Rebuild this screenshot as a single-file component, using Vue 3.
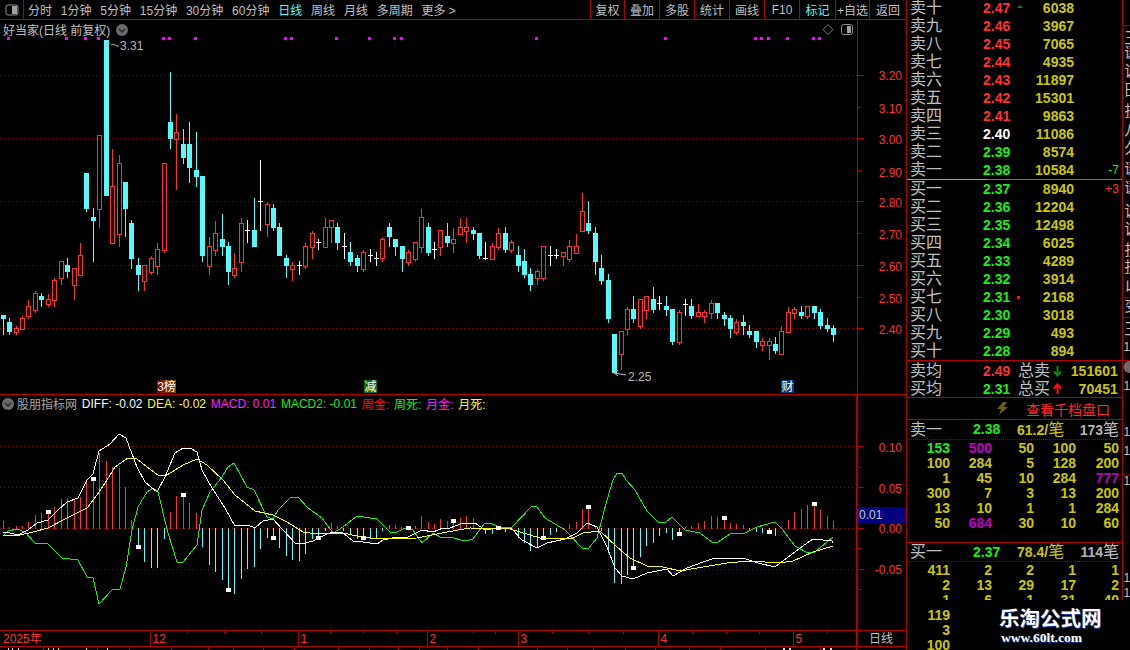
<script setup>
const leftTabs = [
  { t: '分时' }, { t: '1分钟' }, { t: '5分钟' }, { t: '15分钟' }, { t: '30分钟' }, { t: '60分钟' },
  { t: '日线', on: true }, { t: '周线' }, { t: '月线' }, { t: '多周期' }, { t: '更多 >' }
]
const rightBtns = [
  { t: '复权', w: 34 }, { t: '叠加', w: 35 }, { t: '多股', w: 35 }, { t: '统计', w: 35 }, { t: '画线', w: 35 },
  { t: 'F10', w: 35 }, { t: '标记', w: 36, on: true }, { t: '+自选', w: 34 }, { t: '返回', w: 37 }
]
const c = 'c', r = 'r', w = 'w'
// x, high, low, bodyTop, bodyBottom, kind
const candles = [
  [3,315,334,315,318,c],[9,318,334,322,331,c],[16,326,334,328,332,r],[22,316,329,318,329,r],[28,300,318,306,316,r],
  [35,291,312,293,310,r],[41,293,306,296,299,c],[48,294,306,299,304,r],[54,278,306,280,300,r],[61,261,284,261,278,r],
  [67,258,277,265,271,c],[74,268,299,268,285,r],[80,243,275,255,275,r],[86,173,211,173,208,c],[93,208,261,217,220,c],
  [99,135,227,135,209,r],[106,40,195,40,195,c],[112,149,243,186,243,r],[119,155,246,163,234,r],[125,182,236,182,208,c],
  [131,220,268,223,258,c],[138,258,290,265,274,c],[144,265,290,265,281,r],[151,256,274,258,272,r],[157,243,274,249,266,r],
  [164,163,252,163,250,r],[170,72,148,122,138,c],[176,114,189,132,139,r],[183,129,163,144,157,c],[189,122,182,144,167,c],
  [196,132,186,170,176,c],[202,176,261,176,255,c],[209,237,274,246,266,r],[215,221,255,233,250,r],[222,214,255,239,246,c],
  [228,242,284,246,271,c],[234,253,277,268,275,r],[241,218,271,223,262,r],[247,220,242,230,230,w],[254,198,246,230,246,c],
  [260,160,230,201,201,w],[267,202,236,204,224,r],[273,204,230,208,227,c],[279,223,255,227,255,c],[286,255,277,258,265,c],
  [292,262,280,265,269,r],[299,261,274,265,265,w],[305,243,268,246,266,r],[312,231,258,233,247,r],[318,239,249,242,242,w],
  [325,218,247,227,247,r],[331,220,242,220,227,r],[337,223,249,227,242,c],[344,233,258,246,246,w],[350,242,265,252,261,c],
  [357,255,271,258,265,c],[363,250,271,252,269,r],[370,249,261,255,255,w],[376,252,265,258,258,w],[382,237,261,239,258,r],
  [389,223,246,227,236,c],[395,239,255,239,246,c],[402,246,271,246,258,c],[408,250,265,252,262,r],[415,242,261,242,259,r],
  [421,209,252,217,247,r],[428,223,255,227,252,c],[434,242,258,249,249,w],[440,230,255,230,247,r],[447,223,246,236,242,c],
  [453,228,252,239,243,r],[460,218,234,227,234,r],[466,218,242,227,231,r],[473,227,239,230,233,c],[479,233,258,233,255,c],
  [485,242,259,258,258,w],[492,243,259,246,259,r],[498,228,249,233,247,r],[505,227,252,233,249,c],[511,240,252,242,250,r],
  [518,246,271,255,265,c],[524,249,277,261,274,c],[530,268,290,274,284,c],[537,269,284,271,278,r],[543,246,280,246,278,r],
  [550,246,265,255,255,w],[556,249,258,255,255,w],[563,252,265,252,256,r],[569,240,261,246,259,r],[576,234,253,246,253,r],
  [582,193,231,211,231,r],[588,201,233,223,230,c],[595,227,274,233,261,c],[601,255,284,268,280,c],[608,274,322,280,318,c],
  [614,334,372,334,372,c],[621,331,369,331,354,r],[627,307,334,309,329,r],[633,296,322,309,318,c],[640,299,328,299,326,r],
  [646,296,318,296,310,r],[653,287,312,299,309,c],[659,296,309,303,303,w],[666,296,315,306,309,c],[672,309,344,309,341,c],
  [679,310,344,312,342,r],[685,299,315,304,304,w],[691,299,318,306,315,c],[698,304,316,312,316,r],[704,310,322,312,316,r],
  [711,300,318,303,313,r],[717,303,318,303,312,c],[724,312,325,315,318,c],[730,315,337,318,328,c],[736,319,334,322,332,r],
  [743,315,334,322,325,c],[749,325,337,331,334,c],[756,331,347,331,341,c],[762,338,350,341,345,r],[769,338,359,341,345,r],
  [775,337,353,344,350,c],[781,326,354,331,354,r],[788,307,332,312,332,r],[794,307,318,309,313,r],[801,306,318,312,315,c],
  [807,306,318,306,316,r],[814,306,318,306,312,c],[820,309,328,312,325,c],[827,318,331,325,328,c],[833,325,341,328,334,c]
]
const redCol = '#ff3232', cyanCol = '#54fcfc'
const markers = [8,66,85,98,163,169,195,285,291,336,369,394,401,536,665,755,761,768,787,813,819]
const priceLabels = [[75,'3.20'],[108,'3.10'],[139,'3.00'],[172,'2.90'],[202,'2.80'],[234,'2.70'],[266,'2.60'],[298,'2.50'],[329,'2.40']]
const priceGrid = [75,138,201,265,328]
const priceMinor = [107,170,233,297]

// x, end y
const bars = [
  [3,521],[9,527],[16,526],[22,526],[28,522],[35,515],[41,513],[48,512],[54,507],[61,499],[67,498],[74,499],[80,497],[86,482],[93,479],[99,453],
  [106,461],[112,467],[119,468],[125,487],[131,520],[138,547],[144,561],[151,567],[157,567],[164,538],[170,512],[176,496],[183,495],[189,503],
  [196,513],[202,546],[209,564],[215,571],[222,579],[228,590],[234,593],[241,578],[247,568],[254,566],[260,548],[267,537],[273,538],[279,547],
  [286,555],[292,559],[299,560],[305,553],[312,538],[318,538],[325,530],[331,523],[337,526],[343,530],[350,534],[357,538],[363,538],[370,537],
  [376,537],[382,530],[389,525],[395,525],[401,527],[408,528],[415,526],[421,516],[428,522],[434,524],[440,519],[447,521],[453,521],[460,518],
  [466,516],[473,518],[479,529],[485,533],[492,533],[498,528],[505,531],[511,529],[518,537],[524,542],[530,550],[537,547],[543,538],[550,534],
  [556,531],[563,529],[569,524],[576,522],[582,509],[588,507],[595,526],[601,530],[608,552],[614,582],[621,583],[627,574],[633,568],[640,556],
  [646,545],[653,542],[659,535],[666,532],[672,539],[679,534],[685,527],[691,526],[698,523],[704,521],[711,516],[717,517],[724,518],[730,523],
  [736,524],[743,525],[749,530],[756,531],[762,532],[769,532],[775,535],[781,527],[788,520],[794,512],[801,509],[807,505],[814,504],[820,510],
  [827,516],[833,521]
]
const squares = [[48,512],[93,479],[138,547],[183,495],[228,590],[273,538],[318,538],[363,538],[408,528],[453,521],[498,528],[543,538],[588,507],[633,568],[679,534],[724,518],[769,532],[814,504]]
const diffLine = '3,532 10,533 18,535 28,530 37,523 48,520 58,510 67,502 78,498 87,480 93,474 99,451 110,444 119,434 126,438 137,467 145,482 157,492 165,477 175,453 183,448 190,448 197,452 202,470 212,488 225,508 235,526 248,525 255,528 263,521 273,519 283,530 295,543 302,544 313,541 325,535 332,532 343,533 353,541 363,542 377,544 383,540 397,537 408,537 422,530 433,532 443,528 450,528 463,523 475,523 485,530 498,528 512,529 522,540 537,548 547,543 565,539 577,533 587,523 597,527 607,547 615,568 622,576 633,579 647,573 667,569 673,576 687,568 703,562 715,558 727,558 743,558 758,563 775,567 787,558 800,548 813,539 832,541 833,543'
const deaLine = '3,535 20,535 33,532 48,528 67,518 87,508 97,495 107,480 115,467 128,458 137,459 147,467 158,475 167,475 183,465 197,459 207,465 223,480 235,495 255,511 273,515 287,522 303,532 317,534 343,533 357,536 377,539 417,538 422,537 447,532 470,528 510,529 520,532 540,538 573,538 583,533 600,531 617,547 630,558 647,566 663,567 680,571 703,567 727,563 750,561 780,563 793,561 813,552 833,546'
const macd2Line = '3,536 8,531 17,529 25,532 35,543 48,544 62,558 78,560 87,577 93,578 99,604 112,590 120,589 126,567 132,530 138,507 147,492 153,488 158,492 168,533 177,562 183,562 197,545 202,510 210,492 222,477 228,467 234,463 247,487 254,490 267,517 273,519 278,510 290,498 298,497 308,508 322,518 333,533 343,527 357,516 377,519 390,532 397,532 405,528 413,530 422,543 433,533 442,538 450,537 465,541 473,539 485,523 492,524 500,527 512,527 532,506 537,507 545,518 565,530 582,548 588,549 597,538 607,500 613,480 617,473 622,473 626,480 635,490 647,511 658,522 665,523 672,517 685,530 700,533 712,542 718,542 730,534 745,533 757,527 775,522 783,530 795,546 808,553 815,552 833,537'
const macdLabels = [[447,'0.10'],[488,'0.05'],[528,'0.00'],[569,'-0.05']]
const macdGrid = [446,487,569]
const macdMinor = [467,507,548,589]
const legend = [
  { t: 'DIFF: -0.02', k: 'lw' }, { t: 'DEA: -0.02', k: 'ly' }, { t: 'MACD: 0.01', k: 'lm' }, { t: 'MACD2: -0.01', k: 'lg' },
  { t: '周金:', k: 'lr' }, { t: '周死:', k: 'lg' }, { t: '月金:', k: 'lm' }, { t: '月死:', k: 'ly' }
]
const months = [[150,'12'],[298,'1'],[427,'2'],[518,'3'],[658,'4'],[793,'5']]
const timeTicks = [187,224,261,330,363,396,473,495,552,588,623,692,726,759,827]
const stubLines = [43,97,129,171,208,233,263,294,338,369,398,419,447,478,537,567,593,625,655,689,720,765,820,856]

const asks = [
  ['卖十','2.47','6038','r','','up'],['卖九','2.46','3967','r',''],['卖八','2.45','7065','r',''],['卖七','2.44','4935','r',''],
  ['卖六','2.43','11897','r',''],['卖五','2.42','15301','r',''],['卖四','2.41','9863','r',''],['卖三','2.40','11086','w',''],
  ['卖二','2.39','8574','g',''],['卖一','2.38','10584','g','-7']
]
const bids = [
  ['买一','2.37','8940','g','+3'],['买二','2.36','12204','g',''],['买三','2.35','12498','g',''],['买四','2.34','6025','g',''],
  ['买五','2.33','4289','g',''],['买六','2.32','3914','g',''],['买七','2.31','2168','g','','dotm'],['买八','2.30','3018','g',''],
  ['买九','2.29','493','g',''],['买十','2.28','894','g','']
]
const sellTable = [
  [['153','g'],['500','p'],['50'],['100'],['50']],
  [['100'],['284'],['5'],['128'],['200']],
  [['1'],['45'],['10'],['284'],['777','p']],
  [['300'],['7'],['3'],['13'],['200']],
  [['13'],['10'],['1'],['1'],['284']],
  [['50'],['684','p'],['30'],['10'],['60']]
]
const buyTable = [
  ['411','2','2','1','1'],
  ['2','13','29','17','2'],
  ['1','6','1','31','40']
]
const buyExtra = ['119','3','100']
const stripChars = [[37,'王'],[52,'诞'],[70,'诚'],[89,'田'],[110,'投'],[129,'八'],[147,'久'],[168,'诞'],[187,'诞'],[210,'诚'],[228,'诚'],[249,'投'],[266,'投'],[286,'以'],[305,'变'],[328,'王']]
const stripOnes = [346,385,431,450,480,577,592]
</script>

<template>
  <div class="app">
    <div class="left">
      <header class="toolbar">
        <div class="side-toggle">
          <svg width="14" height="12" viewBox="0 0 14 12">
            <rect x="1" y="1" width="12" height="10" rx="2" fill="none" stroke="#909090" />
            <rect x="7" y="2" width="5" height="8" fill="#a0a0a0" />
          </svg>
        </div>
        <nav class="tabs">
          <span v-for="tab in leftTabs" :key="tab.t" class="tab" :class="{ on: tab.on }">{{ tab.t }}</span>
        </nav>
        <div class="btns">
          <span v-for="b in rightBtns" :key="b.t" class="btn" :class="{ on: b.on }" :style="{ width: b.w + 'px' }">{{ b.t }}</span>
        </div>
      </header>

      <section class="kpane">
        <svg class="plot" width="906" height="374" viewBox="0 20 906 374">
          <defs>
            <linearGradient id="tagGrad" x1="0" x2="1" y1="0" y2="0">
              <stop offset="0" stop-color="#7a0000" />
              <stop offset="1" stop-color="#7a4a00" />
            </linearGradient>
          </defs>
          <line v-for="g in priceGrid" :key="g" x1="0" x2="857" :y1="g + 0.5" :y2="g + 0.5" class="dot" />
          <g v-for="k in candles" :key="k[0]">
            <template v-if="k[5] === 'c'">
              <rect :x="k[0]" :y="k[1]" width="1" :height="k[2] - k[1] + 1" :fill="cyanCol" />
              <rect :x="k[0] - 2" :y="k[3]" width="5" :height="k[4] - k[3] + 1" :fill="cyanCol" />
            </template>
            <template v-else-if="k[5] === 'r'">
              <rect :x="k[0]" :y="k[1]" width="1" :height="k[3] - k[1]" :fill="redCol" />
              <rect :x="k[0]" :y="k[4]" width="1" :height="k[2] - k[4] + 1" :fill="redCol" />
              <rect :x="k[0] - 1.5" :y="k[3] + 0.5" width="4" :height="k[4] - k[3]" fill="none" :stroke="redCol" class="crisp" />
            </template>
            <template v-else>
              <rect :x="k[0]" :y="k[1]" width="1" :height="k[2] - k[1] + 1" fill="#fff" />
              <rect :x="k[0] - 2" :y="k[3]" width="5" height="1" fill="#fff" />
            </template>
          </g>
          <rect v-for="m in markers" :key="m" :x="m - 1" y="37" width="3" height="3" fill="#ff00ff" />

          <path d="M108 43 L106 47 M106 43 L110 43 M111 45 Q113 43 115 45 T119 46" fill="none" stroke="#b8b8b8" />
          <text x="120" y="50" class="hl">3.31</text>
          <path d="M614 373 L626 375 M618 370 L614 373 L618 376" fill="none" stroke="#b8b8b8" />
          <text x="628" y="381" class="hl">2.25</text>

          <rect x="157" y="380" width="19" height="13" fill="url(#tagGrad)" />
          <text x="166.5" y="391" text-anchor="middle" class="tag">3榜</text>
          <rect x="364" y="380" width="13" height="13" fill="#0b6b0b" />
          <text x="370.5" y="391" text-anchor="middle" class="tag">减</text>
          <rect x="781" y="380" width="13" height="13" fill="#0c3c6e" />
          <text x="787.5" y="391" text-anchor="middle" class="tag">财</text>

          <rect x="857" y="20" width="1" height="374" fill="#b00000" />
          <g v-for="p in priceLabels" :key="p[1]">
            <text x="902" :y="p[0] + 4.5" text-anchor="end" class="axis">{{ p[1] }}</text>
          </g>
          <rect v-for="g in priceGrid" :key="'t' + g" x="858" :y="g" width="6" height="1" fill="#b00000" />
          <rect v-for="g in priceMinor" :key="'m' + g" x="858" :y="g" width="3" height="1" fill="#b00000" />

          <path d="M828 24.5 L833 29.5 L828 34.5 L823 29.5 Z" fill="none" stroke="#808080" />
          <rect x="841.5" y="24.5" width="11" height="10" rx="2" fill="none" stroke="#909090" />
          <rect x="847" y="26" width="4" height="7" fill="#a0a0a0" />
        </svg>
        <div class="ktitle">
          <span>好当家(日线 前复权)</span>
          <svg class="chev" width="12" height="12" viewBox="0 0 12 12">
            <circle cx="6" cy="6" r="6" fill="#6a6a6a" />
            <path d="M3 5 L6 8 L9 5" fill="none" stroke="#222" stroke-width="1.3" />
          </svg>
        </div>
      </section>

      <section class="ipane">
        <svg class="plot" width="906" height="235" viewBox="0 395 906 235">
          <line v-for="g in macdGrid" :key="g" x1="0" x2="856" :y1="g + 0.5" :y2="g + 0.5" class="dot" />
          <line x1="0" x2="856" y1="528.5" y2="528.5" class="dot" />
          <rect v-for="b in bars" :key="b[0]" :x="b[0]" :y="Math.min(b[1], 528)" width="1" :height="Math.abs(b[1] - 528) + 1" :fill="b[1] <= 528 ? redCol : cyanCol" />
          <polyline :points="macd2Line" class="ln" stroke="#18ef18" />
          <polyline :points="diffLine" class="ln" stroke="#ffffff" />
          <polyline :points="deaLine" class="ln" stroke="#ffff20" />
          <rect v-for="s in squares" :key="s[0]" :x="s[0] - 2" :y="s[1] - 2" width="5" height="4" fill="#fff" />
          <rect x="856" y="395" width="2" height="235" fill="#b00000" />
          <g v-for="p in macdLabels" :key="p[1]">
            <text x="902" :y="p[0] + 4.5" text-anchor="end" class="axis">{{ p[1] }}</text>
          </g>
          <rect v-for="g in macdGrid" :key="'t' + g" x="858" :y="g" width="6" height="1" fill="#b00000" />
          <rect x="858" y="528" width="6" height="1" fill="#b00000" />
          <rect v-for="g in macdMinor" :key="'m' + g" x="858" :y="g" width="3" height="1" fill="#b00000" />
          <rect x="858" y="507" width="48" height="16" fill="#000080" />
          <text x="859" y="519" class="now">0.01</text>
        </svg>
        <div class="legend">
          <svg width="12" height="12" viewBox="0 0 12 12">
            <circle cx="6" cy="6" r="6" fill="#6a6a6a" />
            <path d="M3 5 L6 8 L9 5" fill="none" stroke="#222" stroke-width="1.3" />
          </svg>
          <span class="lname">股朋指标网</span>
          <span v-for="l in legend" :key="l.t" :class="l.k">{{ l.t }}</span>
        </div>
      </section>

      <section class="timeaxis">
        <svg class="plot" width="906" height="15" viewBox="0 631 906 15">
          <text x="3" y="643" class="axis">2025年</text>
          <g v-for="m in months" :key="m[1]">
            <rect :x="m[0]" y="631" width="1" height="15" fill="#b00000" />
            <text :x="m[0] + 2.5" y="643" class="axis">{{ m[1] }}</text>
          </g>
          <rect v-for="t in timeTicks" :key="t" :x="t" y="631" width="1" height="3" fill="#b00000" />
          <rect x="856" y="631" width="2" height="15" fill="#b00000" />
          <text x="869" y="643" class="dayl">日线</text>
        </svg>
      </section>

      <svg class="stub" width="906" height="3" viewBox="0 647 906 3">
        <rect v-for="s in stubLines" :key="s" :x="s" y="647" width="1" height="3" fill="#b00000" />
        <rect x="8" y="648" width="1" height="2" fill="#ddd" />
        <rect x="12" y="648" width="1" height="2" fill="#ddd" />
        <rect x="18" y="648" width="1" height="2" fill="#ddd" />
        <rect x="48" y="648" width="1" height="2" fill="#dd0" />
        <rect x="53" y="648" width="1" height="2" fill="#dd0" />
        <rect x="58" y="648" width="1" height="2" fill="#dd0" />
        <rect x="86" y="648" width="1" height="2" fill="#dd0" />
        <rect x="107" y="648" width="1" height="2" fill="#ddd" />
        <rect x="783" y="648" width="2" height="2" fill="#ddd" />
        <rect x="789" y="648" width="2" height="2" fill="#ddd" />
        <rect x="823" y="648" width="2" height="2" fill="#ddd" />
        <rect x="830" y="648" width="2" height="2" fill="#ddd" />
      </svg>
    </div>

    <aside class="right">
      <div class="book first">
        <div v-for="a in asks" :key="a[0]" class="brow">
          <span class="cn">{{ a[0] }}</span>
          <span class="num" :class="a[3]">{{ a[1] }}</span>
          <span class="num y">{{ a[2] }}</span>
          <span class="delta lgc">{{ a[4] }}</span>
          <i v-if="a[5]" :class="a[5]"></i>
        </div>
      </div>
      <div class="mid"><i class="mo"></i><i class="mb"></i></div>
      <div class="book">
        <div v-for="b in bids" :key="b[0]" class="brow">
          <span class="cn">{{ b[0] }}</span>
          <span class="num" :class="b[3]">{{ b[1] }}</span>
          <span class="num y">{{ b[2] }}</span>
          <span class="delta lrc">{{ b[4] }}</span>
          <i v-if="b[5]" :class="b[5]"></i>
        </div>
      </div>
      <div class="summary">
        <div class="srow">
          <span class="cn">卖均</span><span class="num r sp">2.49</span>
          <span class="cn tot">总卖</span>
          <svg class="ar" width="9" height="12" viewBox="0 0 9 12"><path d="M4.5 1 V10 M1 6.5 L4.5 10.5 L8 6.5" fill="none" stroke="#0a8a0a" stroke-width="2" /></svg>
          <span class="num y sv">151601</span>
        </div>
        <div class="srow">
          <span class="cn">买均</span><span class="num g sp">2.31</span>
          <span class="cn tot">总买</span>
          <svg class="ar" width="9" height="12" viewBox="0 0 9 12"><path d="M4.5 11 V2 M1 5.5 L4.5 1.5 L8 5.5" fill="none" stroke="#ff1010" stroke-width="2" /></svg>
          <span class="num y sv">70451</span>
        </div>
      </div>
      <div class="depth">
        <svg width="12" height="13" viewBox="0 0 12 13"><path d="M7 0 H11 L8 5 H12 L3 13 L5 7 H1 Z" fill="#6e5a20" /></svg>
        <span>查看千档盘口</span>
      </div>
      <div class="deal">
        <span class="cn">卖一</span><span class="num g dp">2.38</span>
        <span class="num y da">61.2/<b class="cnb">笔</b></span>
        <span class="num gr dt">173<b class="cnb">笔</b></span>
      </div>
      <div class="ticks">
        <div v-for="(row, i) in sellTable" :key="i" class="trow">
          <span v-for="(v, j) in row" :key="j" class="num" :class="v[1] || 'y'">{{ v[0] }}</span>
        </div>
      </div>
      <div class="deal buy">
        <span class="cn">买一</span><span class="num g dp">2.37</span>
        <span class="num y da">78.4/<b class="cnb">笔</b></span>
        <span class="num gr dt">114<b class="cnb">笔</b></span>
      </div>
      <div class="ticks cut">
        <div v-for="(row, i) in buyTable" :key="i" class="trow">
          <span v-for="(v, j) in row" :key="j" class="num y">{{ v }}</span>
        </div>
      </div>
      <div class="extra">
        <div v-for="v in buyExtra" :key="v" class="trow">
          <span class="num y">{{ v }}</span>
        </div>
      </div>
    </aside>

    <svg class="strip" width="6" height="650" viewBox="1124 0 6 650">
      <rect x="1124" y="25" width="6" height="1" fill="#b00000" />
      <rect x="1124" y="297" width="6" height="1" fill="#b00000" />
      <rect x="1124" y="317" width="6" height="1" fill="#b00000" />
      <rect x="1124" y="360" width="6" height="1" fill="#b00000" />
      <line x1="1124" x2="1130" y1="474.5" y2="474.5" class="dot" />
      <text v-for="s in stripChars" :key="s[0]" x="1125" :y="s[0] + 6" class="stc">{{ s[1] }}</text>
      <text v-for="o in stripOnes" :key="o" x="1124" :y="o + 5" class="sto">1</text>
      <circle cx="1130" cy="367" r="6" fill="#6a6a6a" />
    </svg>

    <div class="mark">
      <div class="m1">乐淘公式网</div>
      <div class="m2">www.60lt.com</div>
    </div>
  </div>
</template>

<style>
html, body { margin: 0; background: #000; }
</style>

<style scoped>
.app {
  --line: #b00000;
  display: flex;
  width: 1130px;
  height: 650px;
  overflow: hidden;
  position: relative;
  background: #000;
  color: #c0c0c0;
  font-family: "Liberation Sans", "Noto Sans CJK SC", sans-serif;
  font-size: 12px;
}
.left { width: 906px; flex: none; border-right: 1px solid var(--line); }
.toolbar {
  height: 19px;
  display: flex;
  align-items: center;
  border-bottom: 1px solid var(--line);
  box-sizing: content-box;
}
.side-toggle {
  width: 23px;
  height: 19px;
  flex: none;
  display: flex;
  align-items: center;
  justify-content: center;
  border-right: 1px solid var(--line);
  margin-right: 4px;
}
.tabs { display: flex; gap: 8.8px; white-space: nowrap; }
.tab.on, .btn.on { color: #54fcfc; }
.btns { display: flex; margin-left: auto; height: 19px; }
.btn {
  display: flex;
  align-items: center;
  justify-content: center;
  border-left: 1px solid var(--line);
  box-sizing: border-box;
  white-space: nowrap;
}
.kpane {
  height: 374px;
  position: relative;
  border-bottom: 1px solid var(--line);
}
.ipane {
  height: 235px;
  position: relative;
  border-bottom: 1px solid var(--line);
}
.timeaxis { height: 15px; border-bottom: 1px solid var(--line); }
.plot, .stub { display: block; }
.ktitle {
  position: absolute;
  left: 3px;
  top: 2px;
  display: flex;
  align-items: center;
  gap: 6px;
  height: 15px;
}
.legend {
  position: absolute;
  left: 2px;
  top: 1px;
  display: flex;
  align-items: center;
  gap: 4.8px;
  height: 15px;
  white-space: nowrap;
}
.lname { color: #a8a8a8; margin-left: -1.8px; }
.lw { color: #fff; }
.ly { color: #ffff20; }
.lm { color: #ff20ff; }
.lg { color: #18ef18; }
.lr { color: #ff1010; }

.dot { stroke: #800808; stroke-width: 1; stroke-dasharray: 1 3; shape-rendering: crispEdges; }
.crisp { shape-rendering: crispEdges; }
.ln { fill: none; stroke-width: 1; shape-rendering: crispEdges; }
.axis { fill: #ff3232; font-size: 12px; }
.hl { fill: #b8b8b8; font-size: 12px; }
.tag { fill: #fff; font-size: 12px; }
.now { fill: #c8c8c8; font-size: 12px; }
.dayl { fill: #c0c0c0; font-size: 12px; }
.stc { fill: #c0c0c0; font-size: 15px; }
.sto { fill: #c0c0c0; font-size: 12px; }

.right { width: 215px; flex: none; border-right: 1px solid var(--line); height: 600px; }
.book { padding-left: 3px; }
.book.first { margin-top: -1px; }
.brow {
  display: grid;
  grid-template-columns: 73px 27px 64px 45px;
  height: 18px;
  align-items: center;
  white-space: nowrap;
  position: relative;
}
.up {
  position: absolute;
  left: 107px;
  top: 6px;
  width: 0;
  height: 0;
  border-left: 3px solid transparent;
  border-right: 3px solid transparent;
  border-bottom: 3px solid #0a8a0a;
}
.dotm {
  position: absolute;
  left: 107px;
  top: 8px;
  width: 3px;
  height: 3px;
  background: #ff1010;
}
.cn { font-size: 16px; color: #c0c0c0; line-height: 18px; }
.num {
  font-size: 14px;
  font-weight: 700;
  text-align: right;
  line-height: 15px;
}
.r { color: #ff3232; }
.g { color: #18ef18; }
.w { color: #fff; }
.y { color: #c8c800; }
.p { color: #c000c0; }
.gr { color: #b4b4b4; }
.delta { font-size: 12px; text-align: right; }
.lgc { color: #18ef18; }
.lrc { color: #ff3232; }
.mid { display: flex; height: 1px; }
.mo { width: 81px; background: #d09a40; }
.mb { flex: 1; background: #4080c0; }
.summary {
  border-top: 1px solid var(--line);
  border-bottom: 1px solid var(--line);
  height: 38px;
  padding: 1px 0 0 3px;
  box-sizing: border-box;
}
.srow { display: flex; align-items: center; height: 18px; white-space: nowrap; }
.sp { width: 27px; margin-left: 41px; flex: none; }
.tot { margin-left: 8px; }
.ar { flex: none; margin-left: 3px; }
.sv { margin-left: auto; margin-right: 4px; letter-spacing: .1px; }
.depth {
  height: 21px;
  border-bottom: 1px solid var(--line);
  display: flex;
  align-items: center;
  padding-left: 89px;
  gap: 18px;
  color: #ff2828;
  font-size: 14px;
}
.deal {
  height: 19px;
  display: flex;
  align-items: center;
  padding-left: 3px;
  white-space: nowrap;
  border-bottom: 1px dotted #800808;
}
.dp { width: 27px; margin-left: 31px; flex: none; }
.da { margin-left: 17px; }
.dt { margin-left: auto; margin-right: 3px; }
.cnb { font-size: 16px; font-weight: 400; color: #c0c0c0; }
.da .cnb { color: #c8c800; }
.ticks { padding: 1px 3px 0 3px; height: 103px; box-sizing: border-box; border-bottom: 1px solid var(--line); }
.ticks.cut { height: 38px; overflow: hidden; border-bottom: 0; }
.deal.buy { height: 18px; }
.trow {
  display: grid;
  grid-template-columns: 40px 42px 42px 42px 43px;
  height: 15px;
  white-space: nowrap;
}
.extra { padding: 0 3px; margin-top: 8px; }
.strip { flex: 1; display: block; }
.mark {
  position: absolute;
  left: 960px;
  top: 600px;
  width: 170px;
  height: 50px;
  background: #000;
  box-sizing: border-box;
  padding: 5px 0 0 39px;
  white-space: nowrap;
}
.m1 {
  font-family: "Noto Sans CJK SC", sans-serif;
  font-size: 20.5px;
  font-weight: 700;
  line-height: 24px;
  color: #fff;
  text-shadow: 1px 1px 0 #1a3a9a;
}
.m2 {
  font-family: "Liberation Serif", serif;
  font-size: 13.5px;
  font-weight: 700;
  line-height: 16px;
  margin: 1px 0 0 2px;
  color: #fff;
  text-shadow: 1px 1px 0 #1a3a9a;
}
</style>
